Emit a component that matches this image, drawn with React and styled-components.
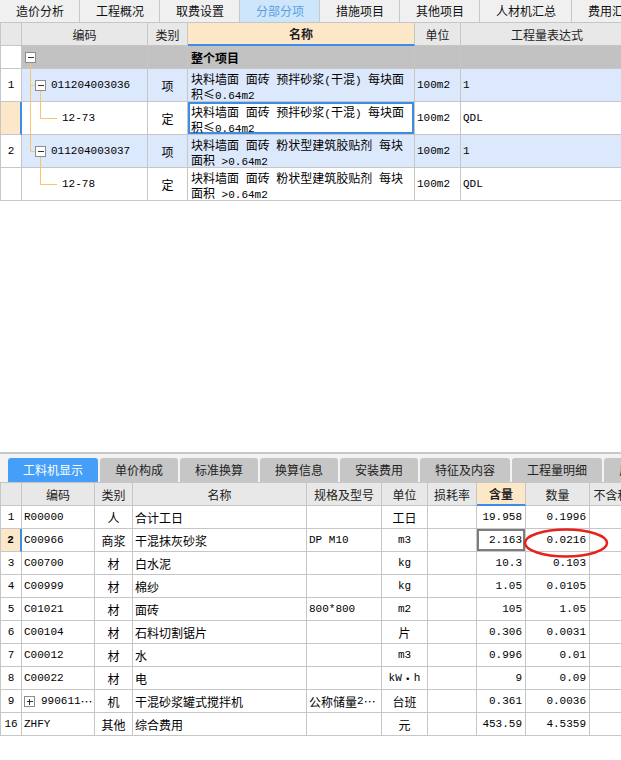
import React from "react";
import styled, { createGlobalStyle, css } from "styled-components";

const LINE = "#c6c6c6";
const BLUE = "#3a8ee8";
const PEACH = "#fde7c9";
const ROWBLUE = "#dce8fb";
const ORANGE = "#f8c46c";

const GlobalStyle = createGlobalStyle`
  html, body { margin: 0; padding: 0; background: #fff; }
  body { font-family: "Noto Sans CJK SC", "Noto Sans", sans-serif; }
`;

const Page = styled.div`
  width: 621px;
  height: 760px;
  overflow: hidden;
  display: flex;
  flex-direction: column;
  background: #fff;
  font-family: "Noto Sans CJK SC", "Noto Sans", sans-serif;
  font-size: 12px;
  color: #000;
`;

const TopPanel = styled.div`
  flex: 0 0 452px;
  display: flex;
  flex-direction: column;
  overflow: hidden;
`;

const TopTabs = styled.div`
  display: flex;
  height: 22px;
  flex: none;
  background: #f0f0f0;
  white-space: nowrap;
  overflow: hidden;
`;

const TopTab = styled.div`
  flex: none;
  padding: 0 15px 0 16px;
  line-height: 22px;
  border-right: 1px solid #c8c8c8;
  color: ${(p) => (p.$active ? "#5d9ee3" : "#111")};
  background: ${(p) => (p.$active ? "#cde6fb" : "transparent")};
`;

const Row = styled.div`
  display: grid;
  grid-template-columns: ${(p) => p.$cols};
  height: ${(p) => p.$h}px;
  flex: none;
  box-sizing: border-box;
  border-left: 1px solid ${LINE};
  ${(p) => p.$head && css`border-top: 1px solid ${LINE};`}
  background: ${(p) => p.$bg || "#fff"};
`;

const Cell = styled.div`
  box-sizing: border-box;
  position: relative;
  display: flex;
  align-items: center;
  justify-content: ${(p) =>
    p.$align === "center" ? "center" : p.$align === "right" ? "flex-end" : "flex-start"};
  padding: 0 ${(p) => (p.$pr ?? 2)}px 0 ${(p) => (p.$pl ?? 2)}px;
  border-right: 1px solid ${LINE};
  border-bottom: 1px solid ${LINE};
  background: ${(p) => p.$bg || "transparent"};
  font-weight: ${(p) => (p.$bold ? 700 : 400)};
  white-space: nowrap;
  overflow: hidden;
  min-width: 0;
  ${(p) => p.$mark && css`border-right: 2px solid ${BLUE};`}
  ${(p) => p.$under && css`border-bottom: 2px solid ${BLUE};`}
  ${(p) => p.$focus && css`box-shadow: inset 0 0 0 2px ${p.$focus};`}
`;

const HeadCell = styled(Cell)`
  justify-content: center;
  background: ${(p) => p.$bg || "#e8e8e8"};
  color: #222;
`;

const NameLines = styled.div`
  display: flex;
  flex-direction: column;
  padding-top: 1px;
`;

const NameLine = styled.div`
  height: 15px;
  line-height: 15px;
  white-space: pre;
`;

const Latin = styled.span`
  font-family: "Liberation Mono", "DejaVu Sans Mono", monospace;
  font-size: 11px;
  line-height: 1;
`;

const Filler = styled.div`
  flex: 1;
`;

const BottomPanel = styled.div`
  flex: 1;
  display: flex;
  flex-direction: column;
  position: relative;
`;

const SubTabs = styled.div`
  display: flex;
  gap: 2px;
  height: 30px;
  box-sizing: border-box;
  padding: 4px 0 0 8px;
  background: #f3f3f3;
  border-top: 2px solid #c8c8c8;
  flex: none;
  white-space: nowrap;
  overflow: hidden;
`;

const SubTab = styled.div`
  flex: none;
  height: 24px;
  line-height: 24px;
  padding: 0 15px;
  border-radius: 3px 3px 0 0;
  background: ${(p) => (p.$active ? "#459ef8" : "#c6c6c6")};
  color: ${(p) => (p.$active ? "#fff" : "#222")};
`;

const Rows = styled.div`
  position: relative;
  display: flex;
  flex-direction: column;
`;

const Overlay = styled.svg`
  position: absolute;
  left: 520px;
  top: 20px;
  pointer-events: none;
`;

const TreeSvg = styled.svg`
  position: absolute;
  left: 0;
  top: 0;
`;

function Txt({ s }) {
  return s
    .split(/([\x20-\x7e]+)/)
    .filter(Boolean)
    .map((part, i) =>
      /^[\x20-\x7e]+$/.test(part) ? (
        <Latin key={i}>{part}</Latin>
      ) : (
        <React.Fragment key={i}>{part}</React.Fragment>
      )
    );
}

function Box({ x, y, plus }) {
  return (
    <g>
      <rect x={x + 0.5} y={y + 0.5} width="10" height="10" fill="#fff" stroke="#8c8c8c" />
      <line x1={x + 3} y1={y + 5.5} x2={x + 9} y2={y + 5.5} stroke="#333" />
      {plus && <line x1={x + 5.5} y1={y + 3} x2={x + 5.5} y2={y + 9} stroke="#333" />}
    </g>
  );
}

// tree connector lines of the code column, drawn over the cell
function Tree({ kind, h }) {
  const o = { stroke: ORANGE, strokeWidth: 1 };
  return (
    <TreeSvg width="126" height={h}>
      {kind === "root" && (
        <>
          <line x1="8.5" y1="17" x2="8.5" y2={h} {...o} />
          <Box x={3} y={6} />
        </>
      )}
      {kind === "item" && (
        <>
          <line x1="8.5" y1="0" x2="8.5" y2={h} {...o} />
          <line x1="8.5" y1="16.5" x2="13" y2="16.5" {...o} />
          <line x1="18.5" y1="22" x2="18.5" y2={h} {...o} />
          <Box x={13} y={11} />
        </>
      )}
      {kind === "lastItem" && (
        <>
          <line x1="8.5" y1="0" x2="8.5" y2="16.5" {...o} />
          <line x1="8.5" y1="16.5" x2="13" y2="16.5" {...o} />
          <line x1="18.5" y1="22" x2="18.5" y2={h} {...o} />
          <Box x={13} y={11} />
        </>
      )}
      {(kind === "sub" || kind === "lastSub") && (
        <>
          {kind === "sub" && <line x1="8.5" y1="0" x2="8.5" y2={h} {...o} />}
          <line x1="18.5" y1="0" x2="18.5" y2="16.5" {...o} />
          <line x1="18.5" y1="16.5" x2="35" y2="16.5" {...o} />
        </>
      )}
      {kind === "plus" && <Box x={2} y={6} plus />}
    </TreeSvg>
  );
}

const TOP_COLS = "21px 126px 40px 227px 46px 173px";
const BOT_COLS = "21px 73px 38px 174px 75px 46px 49px 49px 64px 80px";

const topTabs = ["造价分析", "工程概况", "取费设置", "分部分项", "措施项目", "其他项目", "人材机汇总", "费用汇总"];
const subTabs = ["工料机显示", "单价构成", "标准换算", "换算信息", "安装费用", "特征及内容", "工程量明细", "反查图形工程量"];

const topRows = [
  {
    no: "1",
    tree: "item",
    code: "011204003036",
    type: "项",
    name: ["块料墙面 面砖 预拌砂浆(干混) 每块面", "积≤0.64m2"],
    unit: "100m2",
    expr: "1",
    bg: ROWBLUE,
  },
  {
    no: "",
    tree: "sub",
    code: "12-73",
    type: "定",
    name: ["块料墙面 面砖 预拌砂浆(干混) 每块面", "积≤0.64m2"],
    unit: "100m2",
    expr: "QDL",
    current: true,
  },
  {
    no: "2",
    tree: "lastItem",
    code: "011204003037",
    type: "项",
    name: ["块料墙面 面砖 粉状型建筑胶贴剂 每块", "面积 >0.64m2"],
    unit: "100m2",
    expr: "1",
    bg: ROWBLUE,
  },
  {
    no: "",
    tree: "lastSub",
    code: "12-78",
    type: "定",
    name: ["块料墙面 面砖 粉状型建筑胶贴剂 每块", "面积 >0.64m2"],
    unit: "100m2",
    expr: "QDL",
  },
];

const materials = [
  ["1", "R00000", "人", "合计工日", "", "工日", "19.958", "0.1996"],
  ["2", "C00966", "商浆", "干混抹灰砂浆", "DP M10", "m3", "2.163", "0.0216"],
  ["3", "C00700", "材", "白水泥", "", "kg", "10.3", "0.103"],
  ["4", "C00999", "材", "棉纱", "", "kg", "1.05", "0.0105"],
  ["5", "C01021", "材", "面砖", "800*800", "m2", "105", "1.05"],
  ["6", "C00104", "材", "石料切割锯片", "", "片", "0.306", "0.0031"],
  ["7", "C00012", "材", "水", "", "m3", "0.996", "0.01"],
  ["8", "C00022", "材", "电", "", "kW・h", "9", "0.09"],
  ["9", "990611…", "机", "干混砂浆罐式搅拌机", "公称储量2…", "台班", "0.361", "0.0036"],
  ["16", "ZHFY", "其他", "综合费用", "", "元", "453.59", "4.5359"],
];

export default function App() {
  return (
    <Page>
      <GlobalStyle />
      <TopPanel>
        <TopTabs>
          {topTabs.map((t) => (
            <TopTab key={t} $active={t === "分部分项"}>
              {t}
            </TopTab>
          ))}
        </TopTabs>

        <Row $cols={TOP_COLS} $h={24} $head $bg="#e8e8e8">
          <HeadCell />
          <HeadCell>编码</HeadCell>
          <HeadCell>类别</HeadCell>
          <HeadCell $bg={PEACH} $bold $under>
            名称
          </HeadCell>
          <HeadCell>单位</HeadCell>
          <HeadCell>工程量表达式</HeadCell>
        </Row>

        <Row $cols={TOP_COLS} $h={23} $bg="#c2c2c2">
          <Cell $bg="#fff" />
          <Cell>
            <Tree kind="root" h={23} />
          </Cell>
          <Cell />
          <Cell $bold $pl={3}>
            整个项目
          </Cell>
          <Cell />
          <Cell />
        </Row>

        {topRows.map((r, i) => (
          <Row key={i} $cols={TOP_COLS} $h={33} $bg={r.bg}>
            <Cell $bg={r.current ? PEACH : "#fff"} $align="center" $mark={r.current}>
              <Latin>{r.no}</Latin>
            </Cell>
            <Cell $pl={r.tree === "sub" || r.tree === "lastSub" ? 40 : 29}>
              <Tree kind={r.tree} h={33} />
              <Latin>{r.code}</Latin>
            </Cell>
            <Cell $align="center">{r.type}</Cell>
            <Cell $pl={3} $focus={r.current ? BLUE : null}>
              <NameLines>
                {r.name.map((l) => (
                  <NameLine key={l}>
                    <Txt s={l} />
                  </NameLine>
                ))}
              </NameLines>
            </Cell>
            <Cell>
              <Latin>{r.unit}</Latin>
            </Cell>
            <Cell>
              <Latin>{r.expr}</Latin>
            </Cell>
          </Row>
        ))}
        <Filler />
      </TopPanel>

      <BottomPanel>
        <SubTabs>
          {subTabs.map((t, i) => (
            <SubTab key={t} $active={i === 0}>
              {t}
            </SubTab>
          ))}
        </SubTabs>

        <Row $cols={BOT_COLS} $h={24} $head $bg="#e8e8e8">
          <HeadCell />
          <HeadCell>编码</HeadCell>
          <HeadCell>类别</HeadCell>
          <HeadCell>名称</HeadCell>
          <HeadCell>规格及型号</HeadCell>
          <HeadCell>单位</HeadCell>
          <HeadCell>损耗率</HeadCell>
          <HeadCell $bg={PEACH} $bold $under>
            含量
          </HeadCell>
          <HeadCell>数量</HeadCell>
          <HeadCell>不含税市场价</HeadCell>
        </Row>

        <Rows>
          {materials.map(([no, code, type, name, spec, unit, content, qty]) => {
            const cur = no === "2";
            return (
              <Row key={no} $cols={BOT_COLS} $h={23}>
                <Cell $align="center" $bg={cur ? PEACH : null} $mark={cur} $bold={cur} $pl={0} $pr={0}>
                  <Latin>{no}</Latin>
                </Cell>
                <Cell $pl={no === "9" ? 19 : 2}>
                  {no === "9" && <Tree kind="plus" h={23} />}
                  <Txt s={code} />
                </Cell>
                <Cell $align="center">{type}</Cell>
                <Cell>{name}</Cell>
                <Cell>
                  <Txt s={spec} />
                </Cell>
                <Cell $align="center">
                  <Txt s={unit} />
                </Cell>
                <Cell />
                <Cell $align="right" $pr={3} $focus={cur ? "#7d7d7d" : null}>
                  <Latin>{content}</Latin>
                </Cell>
                <Cell $align="right" $pr={3}>
                  <Latin>{qty}</Latin>
                </Cell>
                <Cell />
              </Row>
            );
          })}
          <Overlay width="96" height="36">
            <ellipse cx="46" cy="17" rx="41" ry="13.5" fill="none" stroke="#e5231c" strokeWidth="2.5" />
          </Overlay>
        </Rows>
      </BottomPanel>
    </Page>
  );
}
